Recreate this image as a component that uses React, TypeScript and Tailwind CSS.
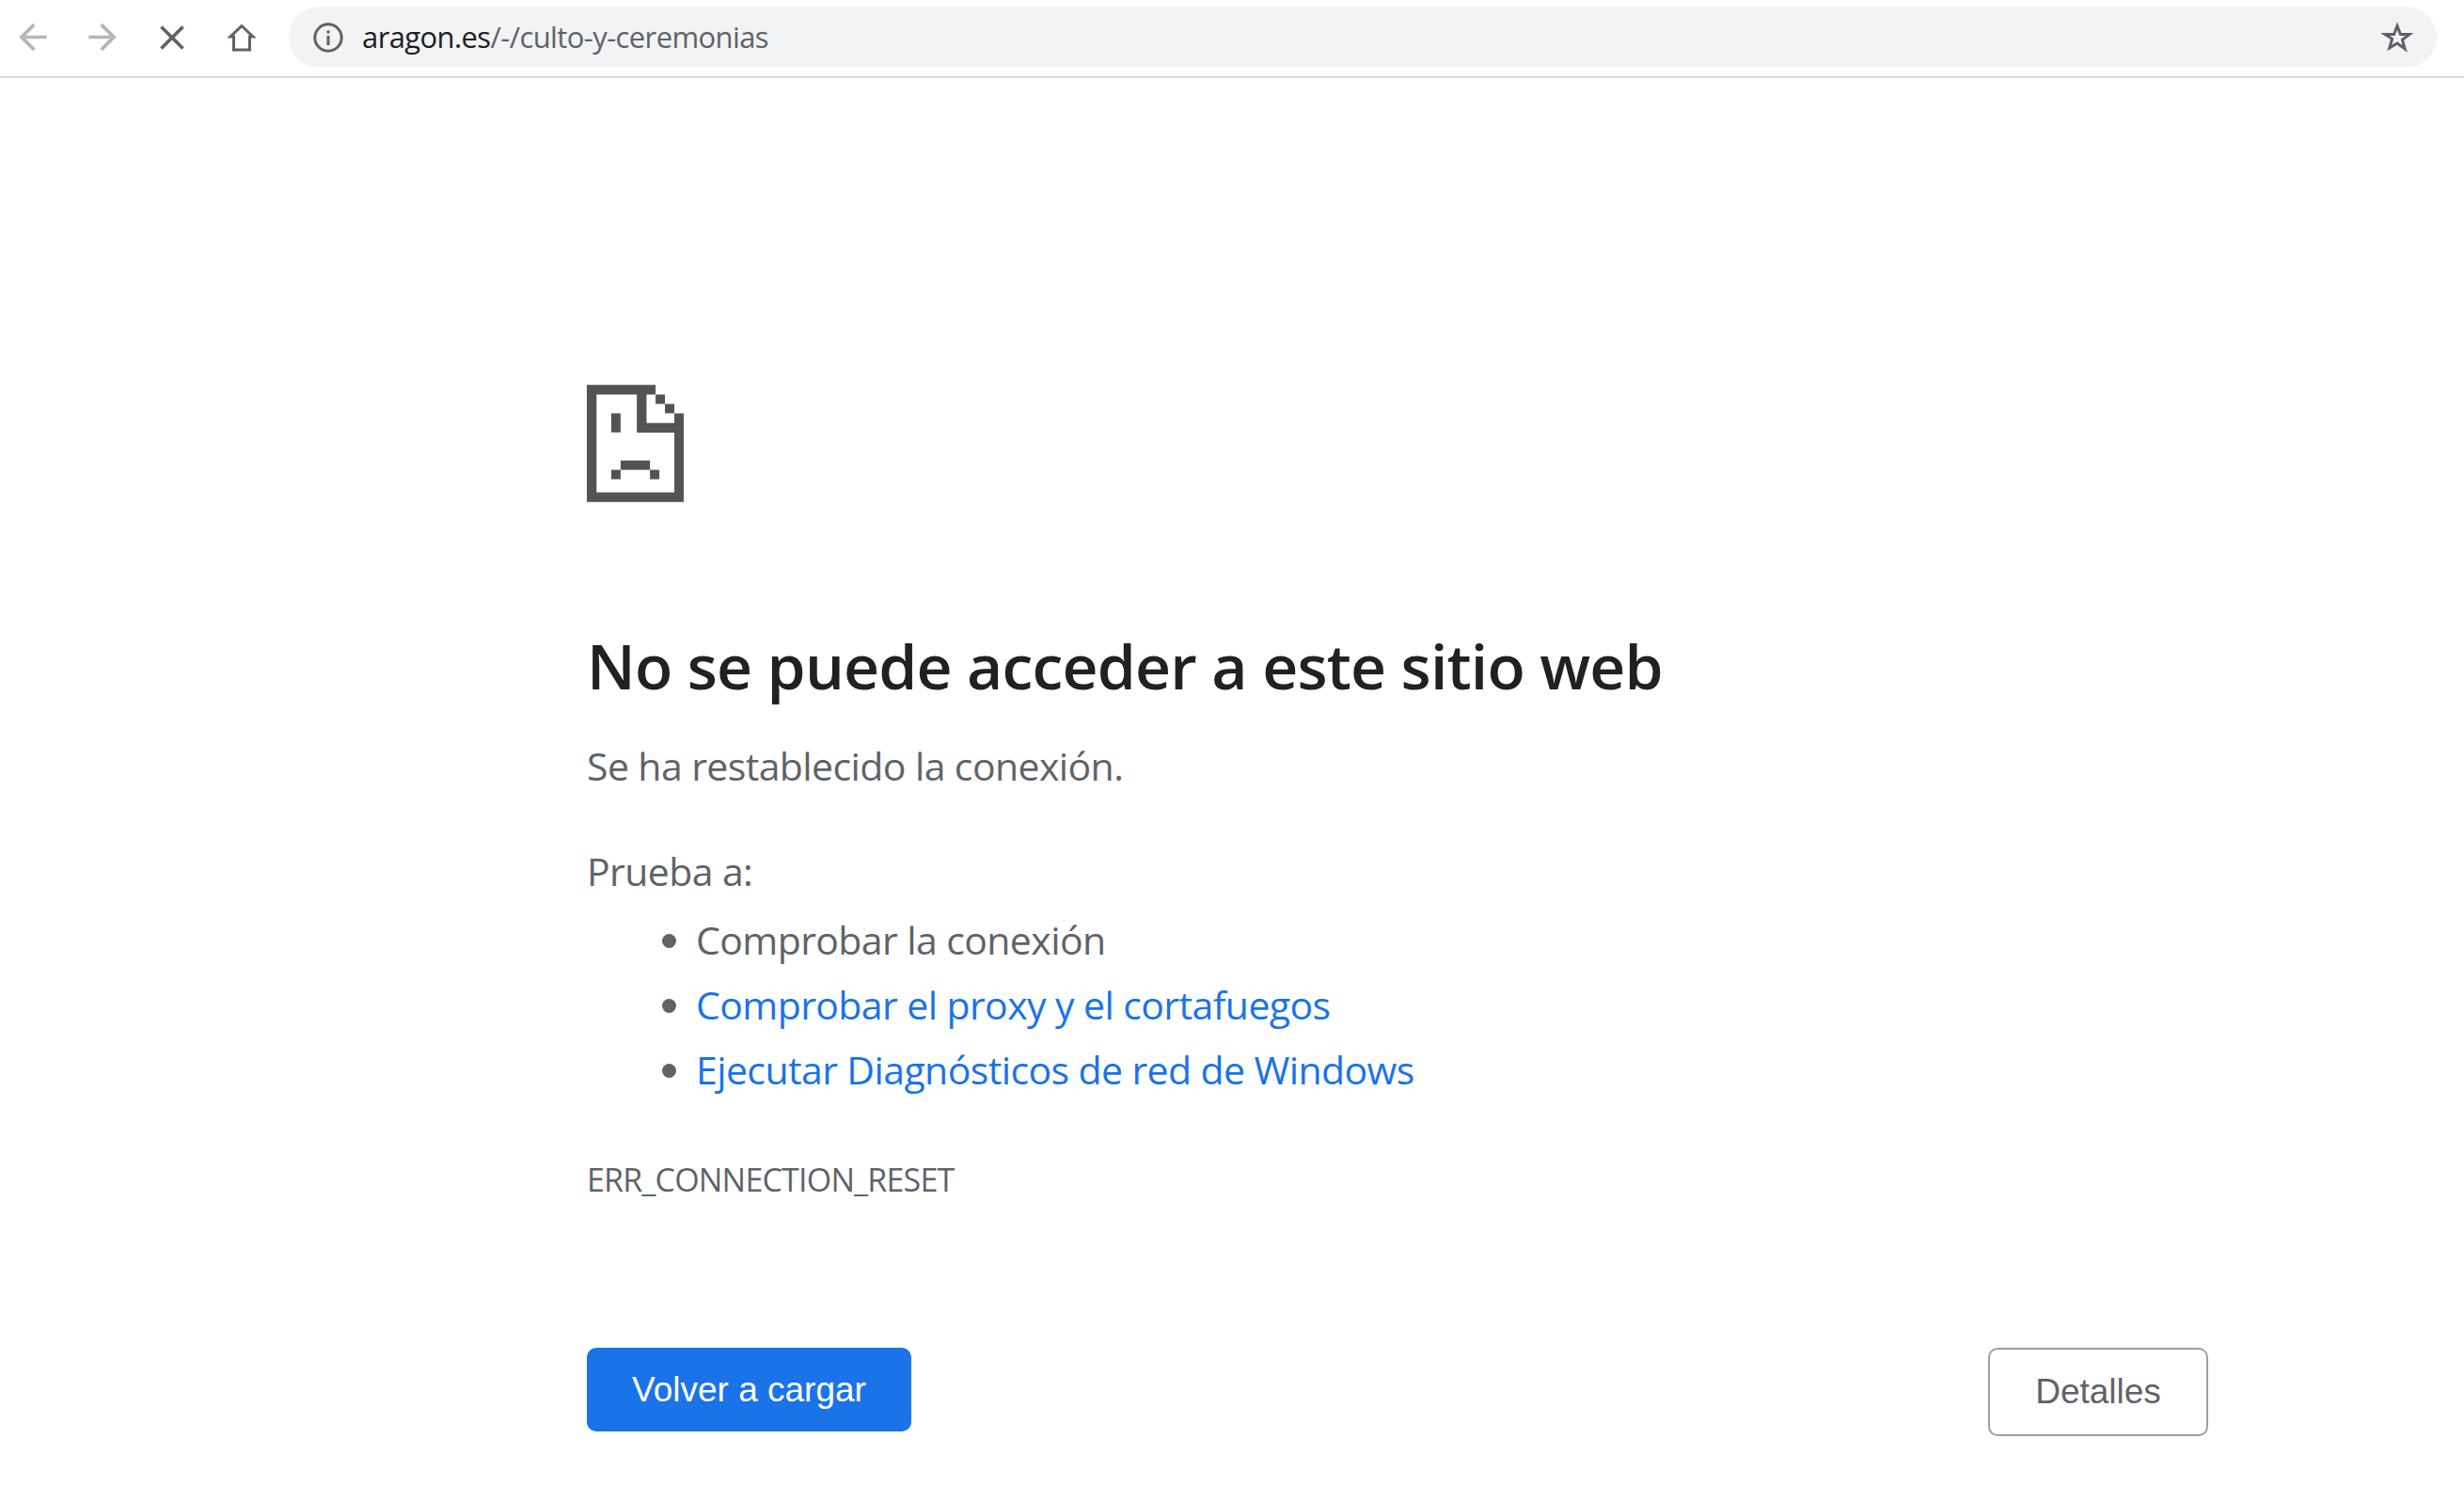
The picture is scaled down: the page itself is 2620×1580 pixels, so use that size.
const Back = () => (
  <svg viewBox="0 0 24 24" className="w-[45px] h-[45px] fill-[#b4b6b9]">
    <path d="M20 11H7.83l5.59-5.59L12 4l-8 8 8 8 1.41-1.41L7.83 13H20v-2z" />
  </svg>
)

const Forward = () => (
  <svg viewBox="0 0 24 24" className="w-[45px] h-[45px] fill-[#b4b6b9]">
    <path d="M4 11h12.17l-5.59-5.59L12 4l8 8-8 8-1.41-1.41L16.17 13H4v-2z" />
  </svg>
)

const Close = () => (
  <svg viewBox="0 0 24 24" className="w-[50px] h-[50px] fill-[#5f6368]">
    <path d="M19 6.41L17.59 5 12 10.59 6.41 5 5 6.41 10.59 12 5 17.59 6.41 19 12 13.41 17.59 19 19 17.59 13.41 12z" />
  </svg>
)

const Home = () => (
  <svg viewBox="0 0 30 30" className="w-[30px] h-[30px] fill-none stroke-[#5f6368] stroke-[3]">
    <path d="M15 2.5 27 14h-3.5v14h-17V14H3z" />
  </svg>
)

const Info = () => (
  <svg viewBox="0 0 32 32" className="w-[32px] h-[32px]">
    <circle cx="16" cy="16" r="14.2" className="fill-none stroke-[#5f6368] stroke-[3]" />
    <rect x="14.5" y="14" width="3" height="10" className="fill-[#5f6368]" />
    <rect x="14.5" y="8.5" width="3" height="3" className="fill-[#5f6368]" />
  </svg>
)

const Star = () => (
  <svg viewBox="0 0 34 34" className="w-[34px] h-[34px] fill-none stroke-[#5f6368] stroke-[3]">
    <path d="M17 4.5l3.4 9h9.6l-7.6 5.8 2.8 9.7L17 23l-8.2 5 2.8-9.7L4 13.5h9.6z" />
  </svg>
)

// Chrome's sad-page icon, drawn on its own pixel grid
const SadPage = () => (
  <svg viewBox="0 0 310 375" className="w-[103px] h-[125px] fill-[#535353]">
    <path d="M0 0h220v31H191V122H280V91h30V375H0zM31 31V344H280V153H160V31z" fillRule="evenodd" />
    <rect x="220" y="31" width="30" height="30" />
    <rect x="250" y="61" width="30" height="30" />
    <rect x="78" y="91" width="30" height="61" />
    <rect x="108" y="242" width="94" height="30" />
    <rect x="78" y="272" width="30" height="30" />
    <rect x="202" y="272" width="30" height="30" />
  </svg>
)

export default function App() {
  return (
    <div className="h-[1580px] w-[2620px] overflow-hidden bg-white font-['Open_Sans','Noto_Sans',sans-serif] text-[#5f6368]">
      <header className="flex h-[83px] items-start border-b-2 border-[#dadce0] pl-[13px] pr-[29px] pt-[7px]">
        <div className="flex h-[65px] items-center gap-[30px]">
          <button className="flex h-[44px] w-[44px] items-center justify-center"><Back /></button>
          <button className="flex h-[44px] w-[44px] items-center justify-center"><Forward /></button>
          <button className="flex h-[44px] w-[44px] items-center justify-center"><Close /></button>
          <button className="flex h-[44px] w-[44px] items-center justify-center"><Home /></button>
        </div>
        <div className="ml-[28px] flex h-[65px] flex-1 items-center rounded-full bg-[#f1f3f4] pl-[26px] pr-[25px]">
          <Info />
          <span className="ml-[20px] flex-1 text-[31px] tracking-[-0.6px] text-[#5f6368]">
            <span className="text-[#202124]">aragon.es</span>/-/culto-y-ceremonias
          </span>
          <Star />
        </div>
      </header>

      <main className="w-[1724px] ml-[624px] pt-[326px]">
        <SadPage />
        <h1 className="mt-[128px] text-[66px] leading-[90px] font-semibold tracking-[-0.8px] text-[#202124]">
          No se puede acceder a este sitio web
        </h1>
        <p className="mt-[32px] text-[41px] leading-[60px] tracking-[-0.6px]">Se ha restablecido la conexión.</p>
        <p className="mt-[52px] text-[41px] leading-[60px] tracking-[-0.6px]">Prueba a:</p>
        <ul className="mt-[9px] list-disc pl-[116px] text-[41px] leading-[69px] tracking-[-0.6px]">
          <li>Comprobar la conexión</li>
          <li className="marker:text-[#5f6368]"><a className="text-[#1a73e8]">Comprobar el proxy y el cortafuegos</a></li>
          <li className="marker:text-[#5f6368]"><a className="text-[#1a73e8]">Ejecutar Diagnósticos de red de Windows</a></li>
        </ul>
        <p className="mt-[57px] text-[34px] leading-[50px] tracking-[-0.8px]">ERR_CONNECTION_RESET</p>
        <div className="mt-[154px] flex items-start justify-between font-['Liberation_Sans',sans-serif] text-[37px]">
          <button className="h-[89px] w-[345px] rounded-[10px] bg-[#1a73e8] text-white">Volver a cargar</button>
          <button className="h-[94px] w-[234px] rounded-[10px] border-2 border-[#9aa0a6] text-[#5f6368]">Detalles</button>
        </div>
      </main>
    </div>
  )
}
